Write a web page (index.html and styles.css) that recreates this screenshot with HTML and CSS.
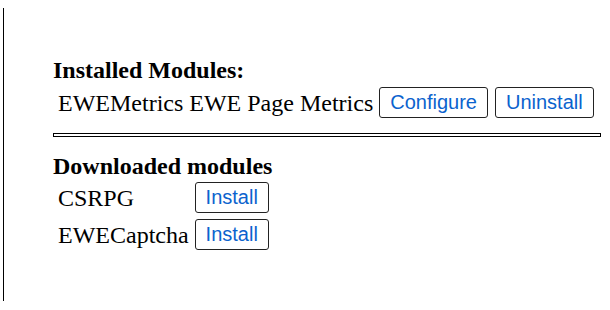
FILE: index.html
```html
<!DOCTYPE html>
<html>
<head>
    <title>Modules</title>
    <link rel="stylesheet" href="styles.css">
</head>
<body>
    <div class="frame">
        <h2 class="section-title">Installed Modules:</h2>
        <div class="module-list installed">
            <span class="module-name">EWEMetrics EWE Page Metrics</span>
            <div class="actions">
                <button class="module-btn">Configure</button>
                <button class="module-btn">Uninstall</button>
            </div>
        </div>
        <hr class="divider">
        <h2 class="section-title">Downloaded modules</h2>
        <div class="module-list downloaded">
            <span class="module-name">CSRPG</span>
            <button class="module-btn">Install</button>
            <span class="module-name">EWECaptcha</span>
            <button class="module-btn">Install</button>
        </div>
    </div>
</body>
</html>
```

FILE: styles.css
```css
body {
    margin: 0;
    background-color: #ffffff;
    color: #000000;
    font-family: "Liberation Serif", "Times New Roman", serif;
}
.frame {
    margin: 8px 0 0 3px;
    height: 293px;
    border-left: 1px solid #000000;
    padding: 48px 8px 0 49px;
    box-sizing: border-box;
}
.section-title {
    font-size: 24px;
    font-weight: bold;
    line-height: 28px;
    margin: 0;
}
.module-list {
    display: grid;
    grid-template-columns: max-content max-content;
    column-gap: 6px;
    row-gap: 6px;
    align-items: center;
    padding-left: 5px;
    font-size: 24px;
    line-height: 28px;
}
.installed {
    margin-top: 3px;
}
.downloaded {
    margin-top: 2px;
}
.actions {
    display: flex;
    gap: 7px;
}
.module-btn {
    font-family: "Liberation Sans", Arial, sans-serif;
    font-size: 20px;
    color: #0b63ce;
    background-color: #ffffff;
    border: 1px solid #222222;
    border-radius: 3px;
    height: 31px;
    padding: 0 10px;
    cursor: pointer;
}
.divider {
    height: 2px;
    border: 1px solid #000000;
    margin: 15px 0 15px 0;
    width: 546px;
    box-sizing: content-box;
}
```
